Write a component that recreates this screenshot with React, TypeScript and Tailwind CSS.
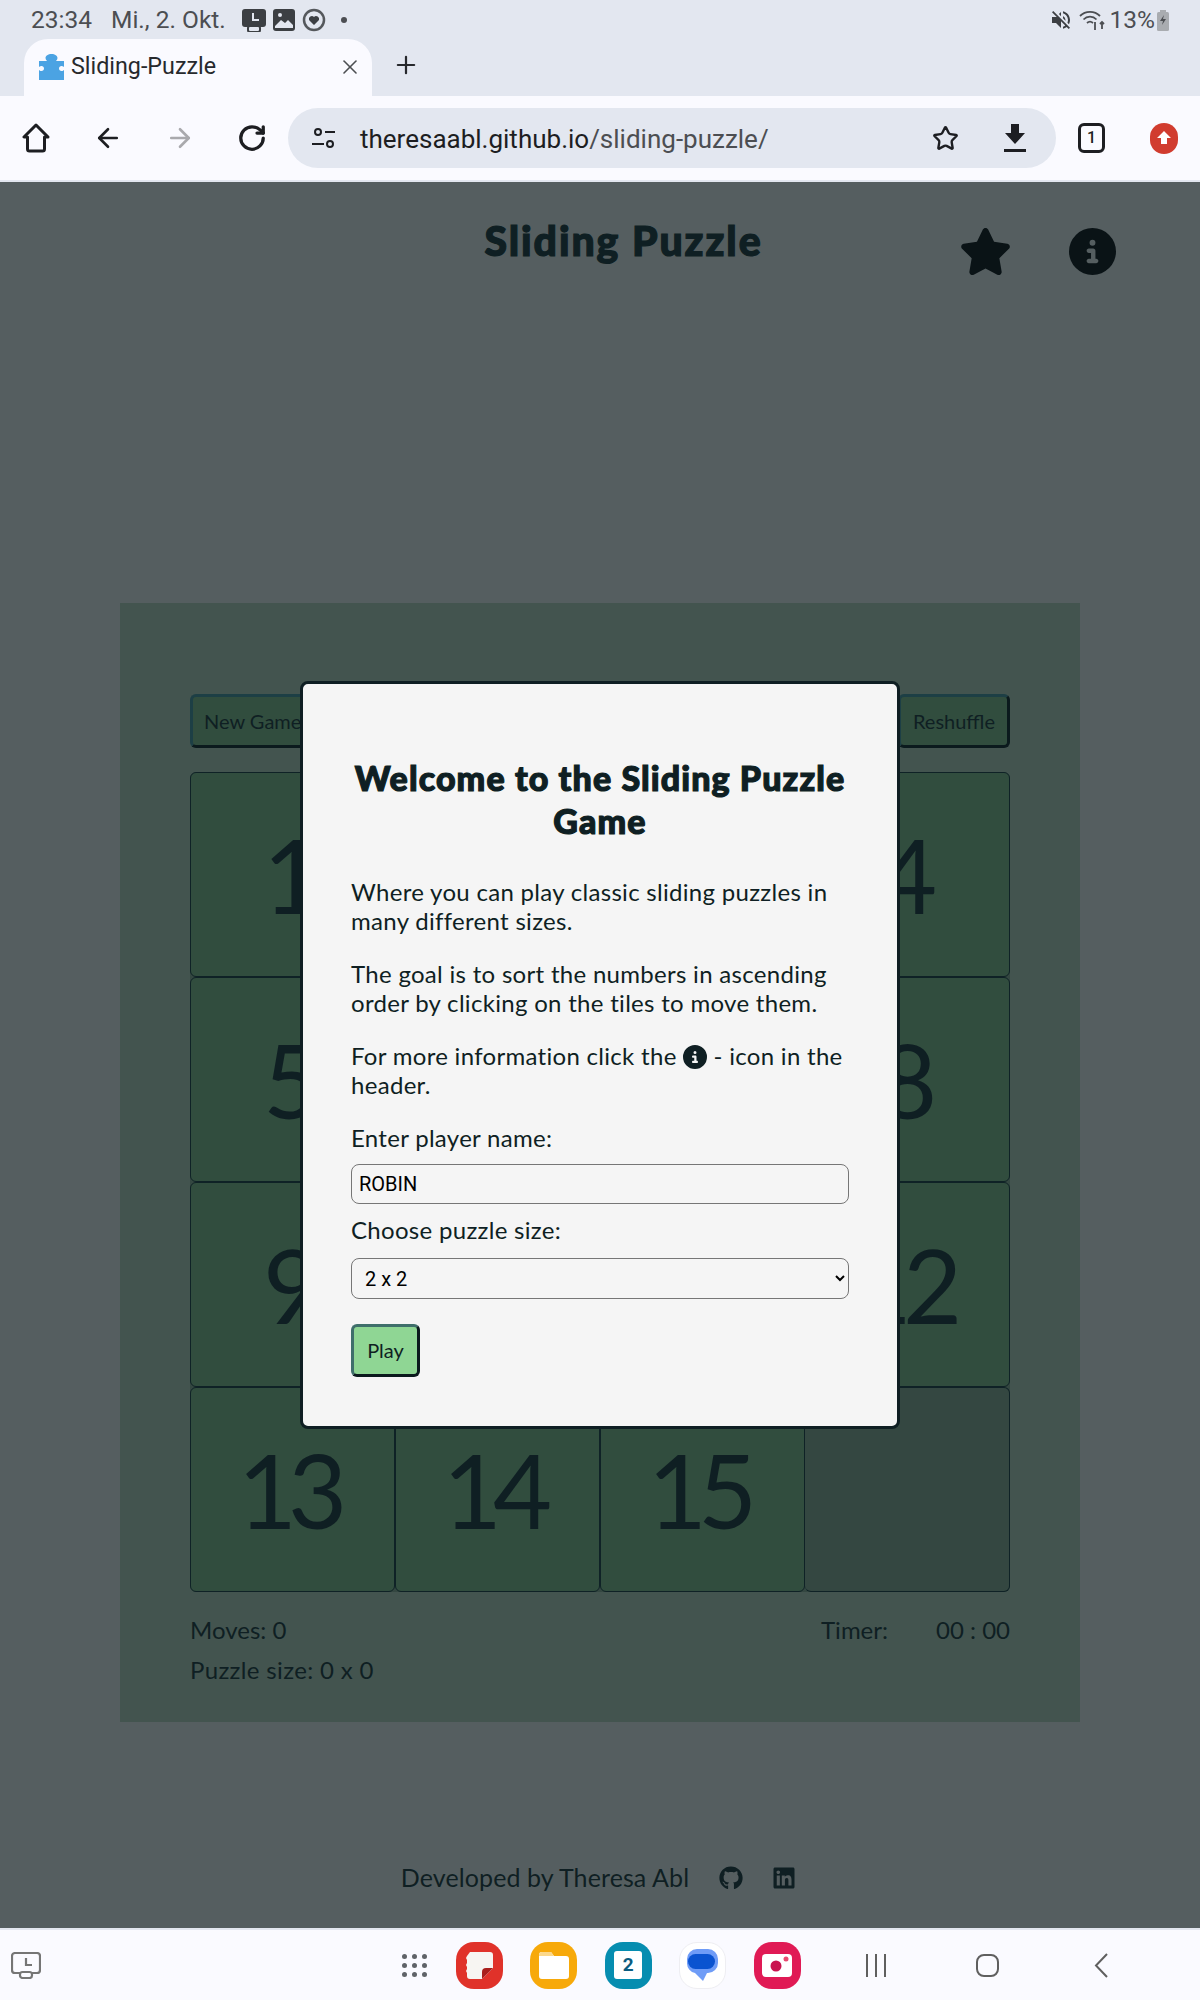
import { ArrowLeft, ArrowRight, RotateCw, X, Plus, Star } from "lucide-react";
import { FaStar, FaCircleInfo, FaGithub, FaLinkedin } from "react-icons/fa6";
import { MdVolumeOff } from "react-icons/md";

const rows = [
  [1, 2, 3, 4],
  [5, 6, 7, 8],
  [9, 10, 11, 12],
  [13, 14, 15, 0],
];

function AppIcon({ className, children }: { className: string; children: React.ReactNode }) {
  return (
    <div className={`w-[47px] h-[47px] rounded-[18px] flex items-center justify-center ${className}`}>
      {children}
    </div>
  );
}

function RecentIcon() {
  return (
    <svg width="30" height="27" viewBox="0 0 30 27" fill="none" stroke="#757575" strokeWidth="2.2">
      <path d="M9 21H4a3 3 0 0 1-3-3V4a3 3 0 0 1 3-3h22a3 3 0 0 1 3 3v14a3 3 0 0 1-3 3h-5" />
      <rect x="9" y="20" width="12" height="6" rx="2.5" />
      <path d="M15 6v7h6" />
    </svg>
  );
}

export default function App() {
  return (
    <div className="w-[1200px] h-[2000px] flex flex-col overflow-hidden bg-[#555e60] font-['Lato',sans-serif]">
      {/* Status bar */}
      <div className="h-[39px] bg-[#e3e7f0] flex items-center justify-between pl-[31px] pr-[31px] pt-[1px] font-['Roboto',sans-serif] text-[24.5px] text-[#4c4e52]">
        <div className="flex items-center">
          <span>23:34</span>
          <span className="ml-[19px]">Mi., 2. Okt.</span>
          <div className="flex items-center gap-[7px] ml-[16px]">
            <svg width="24" height="24" viewBox="0 0 24 24">
              <rect x="0" y="1" width="24" height="18" rx="3" fill="#3c3f43" />
              <rect x="6" y="18" width="12" height="6" rx="2" fill="none" stroke="#3c3f43" strokeWidth="2" />
              <path d="M11 5v7h6" stroke="#e3e7f0" strokeWidth="2" fill="none" />
            </svg>
            <svg width="22" height="22" viewBox="0 0 22 22">
              <rect x="0" y="0" width="22" height="22" rx="3" fill="#3c3f43" />
              <path d="M2 17l6-6 4 3 3-3 5 5v3H2z" fill="#e3e7f0" />
              <circle cx="7" cy="6" r="2" fill="#e3e7f0" />
            </svg>
            <svg width="24" height="24" viewBox="0 0 24 24" fill="none">
              <circle cx="12" cy="12" r="10" stroke="#55585c" strokeWidth="2.5" />
              <path d="M12 17l-5-5a3 3 0 0 1 5-3 3 3 0 0 1 5 3z" fill="#3c3f43" />
            </svg>
            <span className="w-[6px] h-[6px] rounded-full bg-[#4c4e52] ml-[8px]" />
          </div>
        </div>
        <div className="flex items-center">
          <MdVolumeOff size={24} className="text-[#3c3f43]" />
          <svg width="26" height="24" viewBox="0 0 26 24" fill="none" stroke="#4c4e52" strokeWidth="1.8" className="ml-[6px]">
            <path d="M1 8a14 14 0 0 1 20 0M4.500 11.500a9 9 0 0 1 13 0M8 15a4.500 4.500 0 0 1 6 0" />
            <path d="M16 14v8M23 21v-7M21 16l2-2 2 2" />
          </svg>
          <span className="ml-[5px]">13%</span>
          <svg width="12" height="21" viewBox="0 0 12 21" className="ml-[2px]">
            <rect x="0" y="2" width="12" height="19" rx="1.500" fill="#a9acb0" />
            <rect x="3" y="0" width="6" height="3" fill="#a9acb0" />
            <path d="M7 5l-4 6h3l-1 4 4-6H6z" fill="#4c4e52" />
          </svg>
        </div>
      </div>

      {/* Tab strip */}
      <div className="h-[57px] bg-[#e3e7f0] flex items-stretch pl-[24px]">
        <div className="w-[348px] bg-[#fafaff] rounded-t-[24px] flex items-center pl-[15px] pr-[10px] pb-[2px]">
          <svg width="25" height="26" viewBox="0 0 25 26" fill="#4ba3e3">
            <path d="M0 7h8c-1-1-1.500-2-1.500-3C6.500 2 9 0 12.500 0S18.500 2 18.500 4c0 1-.5 2-1.500 3h8v6c-1-1-2-1-2.500-1-1.500 0-2.500 1-2.500 2.500S21 17 22.500 17c.5 0 1.500 0 2.500-1v10H0V16c1 1 2 1 2.500 1C4 17 5 16 5 14.500S4 12 2.500 12C2 12 1 12 0 13z" />
          </svg>
          <span className="ml-[7px] font-['Roboto',sans-serif] text-[23.3px] text-[#27292d] flex-1">Sliding-Puzzle</span>
          <X size={24} strokeWidth={1.6} className="text-[#4c4e52]" />
        </div>
        <div className="flex items-center ml-[20px] pb-[5px]">
          <Plus size={28} strokeWidth={1.9} className="text-[#27292d]" />
        </div>
      </div>

      {/* Toolbar */}
      <div className="h-[84px] bg-[#fafaff] flex items-center text-[#1d1e22]">
        <svg width="28" height="30" viewBox="0 0 28 30" fill="none" stroke="#1d1e22" strokeWidth="3" strokeLinejoin="round" className="ml-[22px]">
          <path d="M14 2L2 14h3.500v12a2 2 0 0 0 2 2h13a2 2 0 0 0 2-2V14H26z" />
        </svg>
        <ArrowLeft size={30} strokeWidth={2.1} className="ml-[43px]" />
        <ArrowRight size={30} strokeWidth={2.1} className="ml-[42px] text-[#a9a9ad]" />
        <RotateCw size={30} strokeWidth={2.6} className="ml-[42px]" />
        <div className="ml-[21px] w-[768px] h-[60px] rounded-full bg-[#e3e7f0] flex items-center pl-[24px] pr-[30px]">
          <svg width="24" height="24" viewBox="0 0 24 24" fill="none" stroke="#1d1e22" strokeWidth="2">
            <circle cx="6" cy="6" r="3" />
            <path d="M13 6h10M0 18h12" />
            <circle cx="18" cy="18" r="3" />
          </svg>
          <span className="ml-[24px] pt-[2px] font-['Roboto',sans-serif] text-[26px] text-[#1d1e22] flex-1 whitespace-nowrap">
            theresaabl.github.io<span className="text-[#4c4e52]">/sliding-puzzle/</span>
          </span>
          <Star size={27} strokeWidth={2.1} className="mr-[6px]" />
          <svg width="22" height="28" viewBox="0 0 22 28" className="ml-[39px]" fill="#1d1e22">
            <path d="M7 0h8v9h6L11 20 1 9h6zM0 25h22v3H0z" />
          </svg>
        </div>
        <div className="ml-[22px] w-[27px] h-[30px] rounded-[6px] border-[3px] border-[#1d1e22] flex items-center justify-center font-['Roboto',sans-serif] text-[16px] font-medium">
          1
        </div>
        <div className="ml-[45px] w-[28px] h-[31px] rounded-full bg-[#d13c2f] flex items-center justify-center">
          <svg width="14" height="14" viewBox="0 0 14 14" fill="#fff">
            <path d="M7 0l7 7H10v6H4V7H0z" />
          </svg>
        </div>
      </div>
      <div className="h-[2px] bg-[#e3e7f0]" />

      {/* Page */}
      <div className="relative flex-1 flex flex-col items-center text-[#0f1f23]">
        <div className="w-full h-[421px] flex items-start">
          <h1 className="ml-[487px] mt-[36px] w-[273px] flex justify-center text-[41px] leading-[46px] font-black tracking-[1.9px] whitespace-nowrap [-webkit-text-stroke:1.2px_#0f1f23]">
            Sliding Puzzle
          </h1>
          <FaStar size={53} className="ml-[199px] mt-[43px] text-[#0a1316]" />
          <FaCircleInfo size={47} className="ml-[57px] mt-[46px] text-[#0a1316]" />
        </div>

        <div className="w-[960px] h-[1119px] bg-[#43544f] px-[70px] pt-[91px]">
          <div className="flex justify-between">
            <button className="h-[54px] px-[11px] rounded-[6px] border-[3px] border-t-[#1d3f45] border-l-[#1d3f45] border-r-[#0b1a1d] border-b-[#0b1a1d] bg-[#314d3e] text-[20px]">
              New Game
            </button>
            <button className="h-[54px] px-[12px] rounded-[6px] border-[3px] border-t-[#1d3f45] border-l-[#1d3f45] border-r-[#0b1a1d] border-b-[#0b1a1d] bg-[#314d3e] text-[20px]">
              Reshuffle
            </button>
          </div>
          <div className="mt-[24px] w-[820px] grid grid-cols-4 bg-[#344741] rounded-[6px]">
            {rows.flat().map((n) =>
              n ? (
                <div
                  key={n}
                  className="h-[205px] bg-[#314d3e] border border-[#0f2226] rounded-[6px] flex items-center justify-center pr-[9px] text-[102px] font-normal tracking-[-9px]"
                >
                  {n}
                </div>
              ) : (
                <div key={n} className="h-[205px] border border-[#0f2226] border-l-0 rounded-[6px]" />
              )
            )}
          </div>
          <div className="mt-[23px] flex justify-between text-[24px] leading-[29px]">
            <span>Moves: 0</span>
            <div className="flex">
              <span>Timer:</span>
              <span className="ml-[48px]">00 : 00</span>
            </div>
          </div>
          <div className="mt-[11px] text-[24px] leading-[29px] tracking-[0.35px]">Puzzle size: 0 x 0</div>
        </div>

        <div className="flex-1 w-full flex items-center justify-center pt-[106px] pr-[3px]">
          <span className="text-[25px] tracking-[0.1px]">Developed by Theresa Abl</span>
          <FaGithub size={24} className="ml-[30px]" />
          <FaLinkedin size={24} className="ml-[29px]" />
        </div>

        {/* Welcome modal */}
        <div className="absolute left-[300px] top-[499px] w-[600px] h-[748px] bg-[#f5f5f5] border-[3px] border-[#0f1f23] rounded-[8px] px-[48px] pt-[72px] text-[24px] leading-[29px] tracking-[0.3px]">
          <h2 className="text-center text-[34px] leading-[43px] font-black tracking-[1.1px] [-webkit-text-stroke:1.2px_#0f1f23]">
            Welcome to the Sliding Puzzle Game
          </h2>
          <p className="mt-[35px]">
            Where you can play classic sliding puzzles in many different sizes.
          </p>
          <p className="mt-[24px]">
            The goal is to sort the numbers in ascending order by clicking on the tiles to move them.
          </p>
          <p className="mt-[24px]">
            For more information click the{" "}
            <FaCircleInfo size={24} className="inline align-[-4px]" /> - icon in the header.
          </p>
          <label className="block mt-[24px]">Enter player name:</label>
          <input
            defaultValue="ROBIN"
            className="block mt-[12px] w-[498px] h-[40px] px-[7px] rounded-[8px] border border-[#767676] bg-[#f5f5f5] font-['Roboto',sans-serif] text-[20px] tracking-normal text-black"
          />
          <label className="block mt-[11px]">Choose puzzle size:</label>
          <select className="block mt-[14px] w-[498px] h-[41px] px-[9px] rounded-[8px] border border-[#767676] bg-[#f5f5f5] font-['Roboto',sans-serif] text-[20px] tracking-normal text-black">
            <option>2 x 2</option>
          </select>
          <button className="block mt-[25px] w-[69px] h-[53px] rounded-[6px] border-[3px] border-t-[#3f6f6b] border-l-[#3f6f6b] border-r-[#0b1a1d] border-b-[#0b1a1d] bg-[#8fd694] text-[20px] tracking-normal">
            Play
          </button>
        </div>
      </div>

      {/* Bottom nav */}
      <div className="h-[2px] bg-[#e3e7f0]" />
      <div className="h-[70px] bg-[#fafaff] flex items-center">
        <div className="ml-[11px]">
          <RecentIcon />
        </div>
        <div className="ml-[361px] grid grid-cols-3 gap-x-[5px] gap-y-[4px]">
          {Array.from({ length: 9 }).map((_, i) => (
            <span key={i} className="w-[5px] h-[5px] rounded-full bg-[#5f6368]" />
          ))}
        </div>
        <div className="ml-[29px] flex gap-[27.4px]">
          <AppIcon className="bg-[#e0322a]">
            <svg width="27" height="27" viewBox="0 0 27 27" fill="#f7f5f2">
              <path d="M4 0h20a3 3 0 0 1 3 3v13L16 27H4a3 3 0 0 1-3-3v-3l-1-2 1-2v-2l-1-2 1-2V8L0 6l1-2z" />
              <path d="M16 27v-7a4 4 0 0 1 4-4h7z" fill="#a91f1c" />
            </svg>
          </AppIcon>
          <AppIcon className="bg-[#f7a90a]">
            <svg width="30" height="27" viewBox="0 0 30 27">
              <path d="M3 0h9l3 4h12a3 3 0 0 1 3 3v17a3 3 0 0 1-3 3H3a3 3 0 0 1-3-3V3a3 3 0 0 1 3-3z" fill="#fff" />
              <path d="M3 0h9l3 4H0V3a3 3 0 0 1 3-3z" fill="#fcd88a" />
            </svg>
          </AppIcon>
          <AppIcon className="bg-[#068db0]">
            <div className="w-[28px] h-[28px] bg-white rounded-[3px] flex items-center justify-center font-['Roboto',sans-serif] text-[19px] font-bold text-[#0b5c80]">
              2
            </div>
          </AppIcon>
          <AppIcon className="bg-white border border-[#eeeef2]">
            <svg width="31" height="32" viewBox="0 0 31 32">
              <path d="M10 0h11a10 10 0 0 1 10 10v4a10 10 0 0 1-10 10h-1l-4 8-8-8A10 10 0 0 1 0 14v-4A10 10 0 0 1 10 0z" fill="#6f9cf7" />
              <rect x="1" y="5" width="27" height="15" rx="7.500" fill="#0a53d0" />
            </svg>
          </AppIcon>
          <AppIcon className="bg-[#e01a55]">
            <svg width="30" height="23" viewBox="0 0 30 23">
              <rect width="30" height="23" rx="4" fill="#fff" />
              <circle cx="14" cy="12" r="5.500" fill="#c9134e" />
              <circle cx="24" cy="5" r="2.500" fill="#e84a70" />
            </svg>
          </AppIcon>
        </div>
        <div className="ml-[65px] flex gap-[7px]">
          <span className="w-[2px] h-[23px] bg-[#5f5f5f]" />
          <span className="w-[2px] h-[23px] bg-[#5f5f5f]" />
          <span className="w-[2px] h-[23px] bg-[#5f5f5f]" />
        </div>
        <div className="ml-[90px] w-[23px] h-[23px] rounded-[8px] border-2 border-[#5f5f5f]" />
        <svg width="15" height="25" viewBox="0 0 15 25" fill="none" stroke="#5f5f5f" strokeWidth="2" className="ml-[95px]">
          <path d="M13 1L2 12.500 13 24" />
        </svg>
      </div>
    </div>
  );
}
